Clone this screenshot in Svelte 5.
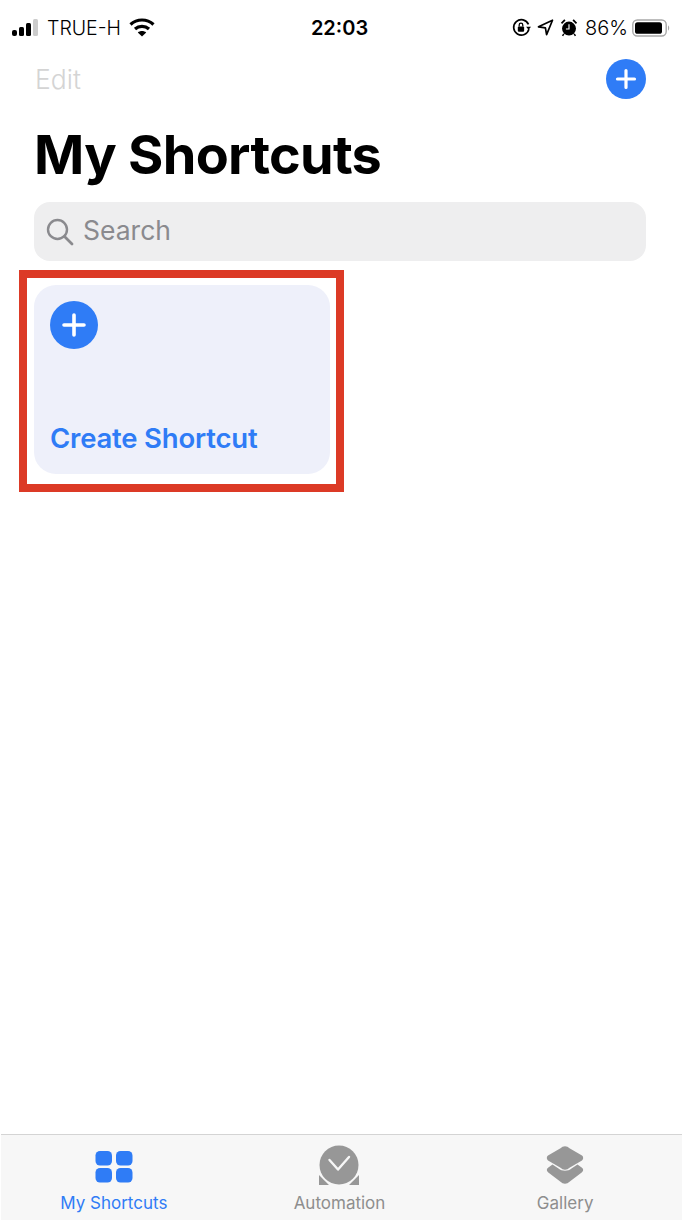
<script lang="ts">
	const tabs = [
		{ label: 'My Shortcuts', icon: 'grid', active: true },
		{ label: 'Automation', icon: 'clock', active: false },
		{ label: 'Gallery', icon: 'layers', active: false }
	];
</script>

<div class="screen">
	<!-- status bar -->
	<header class="status-bar">
		<div class="status-left">
			<svg class="signal" width="28" height="18" viewBox="0 0 28 18">
				<rect x="0" y="11" width="5" height="6" rx="2" fill="#000" />
				<rect x="7" y="8" width="5" height="9" rx="1.5" fill="#000" />
				<rect x="14" y="4" width="5" height="13" rx="1.5" fill="#000" />
				<rect x="21" y="0" width="5" height="17" rx="1.5" fill="#ccc" />
			</svg>
			<span class="carrier">TRUE-H</span>
			<svg class="wifi" width="26" height="19" viewBox="0 0 26 19" fill="none" stroke="#000" stroke-width="3.2">
				<path d="M1.5 6.5 C8 0.5 18 0.5 24.5 6.5" />
				<path d="M6 11 C10 7.4 16 7.4 20 11" />
				<path d="M13 18.5 L8.8 14.4 C11 12.4 15 12.4 17.2 14.4 Z" fill="#000" stroke="none" />
			</svg>
		</div>
		<div class="time">22:03</div>
		<div class="status-right">
			<svg width="19" height="19" viewBox="0 0 18 18" fill="none">
				<path d="M16 10.5 A7.3 7.3 0 1 1 15.6 6" stroke="#000" stroke-width="1.6" />
				<path d="M13.4 8.2 L18 8.2 L15.7 11.2 Z" fill="#000" />
				<rect x="5.5" y="8" width="6" height="5" rx="1" fill="#000" />
				<path d="M6.8 8 V6.6 a1.7 1.7 0 0 1 3.4 0 V8" stroke="#000" stroke-width="1.2" />
			</svg>
			<svg class="arrow" width="17" height="17" viewBox="0 0 17 17" fill="none">
				<path d="M15.5 1.2 L1.5 7.8 L8.4 8.8 L9.6 15.6 Z" stroke="#000" stroke-width="1.7" stroke-linejoin="round" />
			</svg>
			<svg class="alarm" width="18" height="19" viewBox="0 0 17 18">
				<circle cx="8.5" cy="10" r="6.6" fill="#000" />
				<path d="M0.8 4.5 L4 1.2 L5.2 2.4 L2 5.8 Z M16.2 4.5 L13 1.2 L11.8 2.4 L15 5.8 Z" fill="#000" />
				<path d="M3.6 15 L2.4 17 M13.4 15 L14.6 17" stroke="#000" stroke-width="1.4" />
				<path d="M8.5 6 V10.4 H5.6" stroke="#fff" stroke-width="1.1" fill="none" />
			</svg>
			<span class="percent">86%</span>
			<svg width="39" height="18" viewBox="0 0 39 18">
				<rect x="0.8" y="1" width="33.4" height="16" rx="4.5" fill="none" stroke="#a8a8a8" stroke-width="1.4" />
				<rect x="3" y="3.2" width="27" height="11.6" rx="2.6" fill="#000" />
				<path d="M36 6.5 C37.6 7 37.6 11 36 11.5 Z" fill="#a8a8a8" />
			</svg>
		</div>
	</header>

	<!-- nav -->
	<nav class="nav-row">
		<span class="edit">Edit</span>
		<button class="add-btn" aria-label="Add">
			<svg width="40" height="40" viewBox="0 0 40 40">
				<circle cx="20" cy="20" r="20" fill="#2f7cf6" />
				<path d="M20 11.5 V28.5 M11.5 20 H28.5" stroke="#fff" stroke-width="3.2" stroke-linecap="round" />
			</svg>
		</button>
	</nav>

	<h1 class="title">My Shortcuts</h1>

	<div class="search">
		<svg width="28" height="28" viewBox="0 0 28 28" fill="none" stroke="#8a8a8e" stroke-width="2.4">
			<circle cx="11.5" cy="11.5" r="9.5" />
			<path d="M18.5 18.5 L26 26" stroke-linecap="round" stroke-width="2.8" />
		</svg>
		<span class="search-text">Search</span>
	</div>

	<!-- highlighted card -->
	<div class="highlight">
		<div class="card">
			<svg width="48" height="48" viewBox="0 0 48 48">
				<circle cx="24" cy="24" r="24" fill="#2f7cf6" />
				<path d="M24 14 V34 M14 24 H34" stroke="#fff" stroke-width="3.6" stroke-linecap="round" />
			</svg>
			<span class="card-label">Create Shortcut</span>
		</div>
	</div>

	<div class="spacer"></div>

	<!-- tab bar -->
	<footer class="tab-bar">
		{#each tabs as tab}
			<div class="tab" class:active={tab.active}>
				<svg width="44" height="44" viewBox="0 0 44 44">
					{#if tab.icon === 'grid'}
						<g fill="#2f7cf6">
							<rect x="3.5" y="6" width="16.5" height="14.5" rx="4.5" />
							<rect x="24" y="6" width="16.5" height="14.5" rx="4.5" />
							<rect x="3.5" y="23" width="16.5" height="14.5" rx="4.5" />
							<rect x="24" y="23" width="16.5" height="14.5" rx="4.5" />
						</g>
					{:else if tab.icon === 'clock'}
						<path d="M2 30 L2 40 L12 40 Z M42 30 L42 40 L32 40 Z" fill="#979797" />
						<circle cx="22" cy="20" r="21" fill="#f7f7f7" />
						<circle cx="22" cy="20" r="19.5" fill="#979797" />
						<path d="M12.5 15 L21 24.5 L32 12" fill="none" stroke="#f7f7f7" stroke-width="2.4" stroke-linecap="round" stroke-linejoin="round" />
					{:else}
						<g fill="#979797">
							<path d="M17.5 3.3 a6 6 0 0 1 9 0 L39 10.6 a3 3 0 0 1 0 4.8 L26.5 22.7 a6 6 0 0 1 -9 0 L5 15.4 a3 3 0 0 1 0 -4.8 Z" />
							<path d="M9.5 19.5 L15.5 23.5 C19 26.5 25 26.5 28.5 23.5 L34.5 19.5 L39 22.8 a3 3 0 0 1 0 4.4 L26.5 36.7 a6 6 0 0 1 -9 0 L5 27.2 a3 3 0 0 1 0 -4.4 Z" />
						</g>
					{/if}
				</svg>
				<span>{tab.label}</span>
			</div>
		{/each}
	</footer>
</div>

<style>
	:global(body) {
		background: #fff;
	}

	.screen {
		width: 682px;
		height: 1220px;
		display: flex;
		flex-direction: column;
		font-family: Inter, 'Liberation Sans', sans-serif;
		color: #000;
		overflow: hidden;
	}

	/* status bar */
	.status-bar {
		height: 55px;
		padding: 0 11px 0 12px;
		display: grid;
		grid-template-columns: 1fr auto 1fr;
		align-items: center;
		box-sizing: border-box;
	}

	.status-left,
	.status-right {
		display: flex;
		align-items: center;
	}

	.status-right {
		justify-content: flex-end;
		gap: 6px;
	}

	.carrier {
		font-size: 19.5px;
		font-weight: 300;
		margin-left: 7px;
		margin-right: 8px;
	}

	.percent {
		font-size: 20px;
		font-weight: 300;
		margin-left: 1px;
		margin-right: -2px;
	}

	.time {
		font-size: 20px;
		font-weight: 600;
		margin-right: 4px;
	}

	/* nav */
	.nav-row {
		display: flex;
		align-items: center;
		justify-content: space-between;
		height: 46px;
		padding: 0 36px 0 35px;
		margin-top: 1px;
	}

	.edit {
		font-size: 26.5px;
		font-weight: 300;
		color: #d4d4d4;
	}

	.add-btn {
		padding: 0;
		border: 0;
		background: none;
		width: 40px;
		height: 40px;
	}

	.title {
		margin: 21px 0 0 34px;
		font-size: 54px;
		font-weight: 700;
		line-height: 64px;
		letter-spacing: -0.7px;
	}

	.search {
		margin: 15px 36px 0 34px;
		height: 59px;
		border-radius: 16px;
		background: #eeeeef;
		display: flex;
		align-items: center;
		gap: 9px;
		padding-left: 12px;
		color: #8a8a8e;
		font-size: 26.5px;
	}

	.search-text {
		margin-bottom: 4px;
	}

	/* card */
	.highlight {
		margin: 9px 0 0 19px;
		width: 325px;
		height: 222px;
		box-sizing: border-box;
		border: 8px solid #dc3a26;
		padding: 7px 6px 10px 7px;
	}

	.card {
		height: 100%;
		box-sizing: border-box;
		background: #eef0fa;
		border-radius: 22px;
		padding: 16px 16px 19px 16px;
		display: flex;
		flex-direction: column;
		justify-content: space-between;
		align-items: flex-start;
	}

	.card-label {
		font-size: 27.5px;
		font-weight: 600;
		color: #2f7cf6;
		letter-spacing: -0.2px;
	}

	.spacer {
		flex: 1;
	}

	/* tab bar */
	.tab-bar {
		height: 85px;
		margin-left: 1px;
		padding-right: 4px;
		background: #f7f7f7;
		border-top: 1px solid #d4d4d4;
		display: grid;
		grid-template-columns: repeat(3, 1fr);
	}

	.tab {
		display: flex;
		flex-direction: column;
		align-items: center;
		padding-top: 10px;
		gap: 4px;
		color: #8e8e8e;
		font-size: 17px;
	}

	.tab.active {
		color: #2f7cf6;
	}
</style>
